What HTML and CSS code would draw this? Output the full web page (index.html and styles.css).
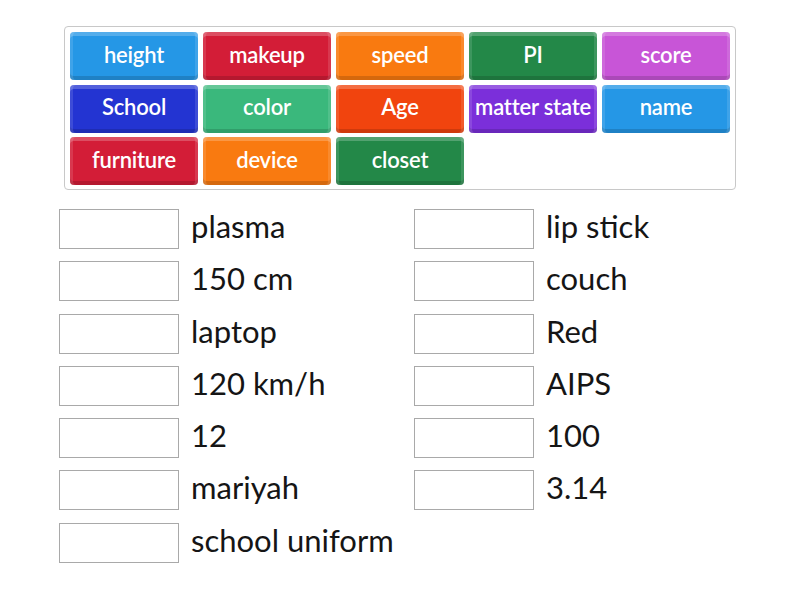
FILE: index.html
```
<!DOCTYPE html>
<html>
<head>
<meta charset="utf-8">
<link rel="stylesheet" href="styles.css">
</head>
<body>
<div class="bank">
  <div class="tile blue">height</div>
  <div class="tile red">makeup</div>
  <div class="tile orange">speed</div>
  <div class="tile green">PI</div>
  <div class="tile orchid">score</div>
  <div class="tile navy">School</div>
  <div class="tile mint">color</div>
  <div class="tile flame">Age</div>
  <div class="tile purple">matter state</div>
  <div class="tile blue">name</div>
  <div class="tile red">furniture</div>
  <div class="tile orange">device</div>
  <div class="tile green">closet</div>
</div>
<div class="answers">
  <div class="col">
    <div class="row"><div class="slot"></div><span class="label">plasma</span></div>
    <div class="row"><div class="slot"></div><span class="label">150 cm</span></div>
    <div class="row"><div class="slot"></div><span class="label">laptop</span></div>
    <div class="row"><div class="slot"></div><span class="label">120 km/h</span></div>
    <div class="row"><div class="slot"></div><span class="label">12</span></div>
    <div class="row"><div class="slot"></div><span class="label">mariyah</span></div>
    <div class="row"><div class="slot"></div><span class="label">school uniform</span></div>
  </div>
  <div class="col">
    <div class="row"><div class="slot"></div><span class="label">lip stick</span></div>
    <div class="row"><div class="slot"></div><span class="label">couch</span></div>
    <div class="row"><div class="slot"></div><span class="label">Red</span></div>
    <div class="row"><div class="slot"></div><span class="label">AIPS</span></div>
    <div class="row"><div class="slot"></div><span class="label">100</span></div>
    <div class="row"><div class="slot"></div><span class="label">3.14</span></div>
  </div>
</div>
</body>
</html>
```
FILE: styles.css
```
html, body {
  margin: 0;
  padding: 0;
  background: #ffffff;
}
body {
  font-family: "Lato", "Noto Sans", sans-serif;
}
.bank {
  margin: 26px 0 0 64px;
  width: 672px;
  box-sizing: border-box;
  border: 1px solid #c8c8c8;
  border-radius: 4px;
  padding: 5px 5px 4px 5px;
  display: grid;
  grid-template-columns: repeat(5, 128px);
  grid-auto-rows: 48px;
  column-gap: 5px;
  row-gap: 4.5px;
}
.tile {
  border-radius: 4px;
  color: #ffffff;
  font-size: 22px;
  font-weight: 600;
  letter-spacing: -0.2px;
  display: flex;
  align-items: center;
  justify-content: center;
  padding-bottom: 4px;
  box-sizing: border-box;
  white-space: nowrap;
  box-shadow: inset 0 4px 0 rgba(255,255,255,0.22), inset 3px 0 0 rgba(255,255,255,0.12), inset -3px 0 0 rgba(255,255,255,0.12), inset 0 -4px 0 rgba(0,0,0,0.14);
}
.blue { background: #2597e6; }
.red { background: #d31d37; }
.orange { background: #f97a10; }
.green { background: #238848; }
.orchid { background: #c855d7; }
.navy { background: #2334d2; }
.mint { background: #3ab87c; }
.flame { background: #f1440e; }
.purple { background: #7b2fda; }
.answers {
  margin: 19px 0 0 59px;
  display: flex;
}
.col {
  width: 355px;
  display: flex;
  flex-direction: column;
  gap: 12.3px;
}
.row {
  display: flex;
  align-items: center;
  height: 40px;
  gap: 12px;
}
.slot {
  width: 120px;
  height: 40px;
  box-sizing: border-box;
  border: 1px solid #a9a9a9;
  flex: none;
}
.label {
  font-size: 31px;
  color: #151515;
  line-height: 40px;
  position: relative;
  top: -3px;
}
```
